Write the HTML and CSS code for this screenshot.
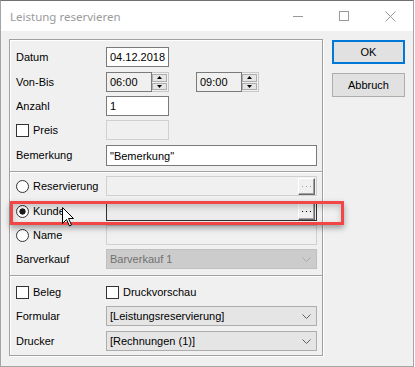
FILE: index.html
```html
<!DOCTYPE html>
<html>
<head>
<meta charset="utf-8">
<link rel="stylesheet" href="styles.css">
</head>
<body>
<div class="win">
  <div class="titlebar">
    <div class="title">Leistung reservieren</div>
    <div class="tbtn"><svg width="10" height="10"><path d="M0 5.5h10" stroke="#999"/></svg></div>
    <div class="tbtn"><svg width="10" height="10"><rect x="0.5" y="0.5" width="9" height="9" fill="none" stroke="#999"/></svg></div>
    <div class="tbtn"><svg width="11" height="11"><path d="M0.5 0.5l10 10M10.5 0.5l-10 10" stroke="#999"/></svg></div>
  </div>
  <div class="client">
    <div class="group">
      <div class="sect s1">
        <div class="row"><span class="lbl">Datum</span><div class="edit w63">04.12.2018</div></div>
        <div class="row r5"><span class="lbl">Von-Bis</span>
          <div class="spin">
            <div class="edit ro w46">06:00</div>
            <div class="sbtns">
              <div class="sb"><svg width="5" height="3"><path d="M2.5 0L5 3H0z"/></svg></div>
              <div class="sb"><svg width="5" height="3"><path d="M0 0H5L2.5 3z"/></svg></div>
            </div>
          </div>
          <div class="spin sp2">
            <div class="edit ro w46">09:00</div>
            <div class="sbtns">
              <div class="sb"><svg width="5" height="3"><path d="M2.5 0L5 3H0z"/></svg></div>
              <div class="sb"><svg width="5" height="3"><path d="M0 0H5L2.5 3z"/></svg></div>
            </div>
          </div>
        </div>
        <div class="row"><span class="lbl">Anzahl</span><div class="edit w63">1</div></div>
        <div class="row"><span class="lbl"><i class="chk"></i>Preis</span><div class="edit dis w63"></div></div>
        <div class="row r5"><span class="lbl">Bemerkung</span><div class="edit wide tall">"Bemerkung"</div></div>
      </div>
      <div class="sep"></div>
      <div class="sect s2">
        <div class="row"><span class="lbl"><i class="radio"></i>Reservierung</span>
          <div class="edit dis wide browse"><div class="dots off"><svg width="9" height="1"><rect x="0" width="1" height="1"/><rect x="4" width="1" height="1"/><rect x="8" width="1" height="1"/></svg></div></div>
        </div>
        <div class="row r5"><span class="lbl"><i class="radio on"></i>Kunde</span>
          <div class="edit kd wide browse"><div class="dots"><svg width="9" height="1"><rect x="0" width="1" height="1"/><rect x="4" width="1" height="1"/><rect x="8" width="1" height="1"/></svg></div></div>
        </div>
        <div class="row"><span class="lbl"><i class="radio"></i>Name</span><div class="edit dis wide"></div></div>
        <div class="row"><span class="lbl">Barverkauf</span>
          <div class="combo dcombo"><span>Barverkauf 1</span><svg width="9" height="5"><path d="M0.5 0.5L4.5 4.5L8.5 0.5" fill="none" stroke="#a8a8a8"/></svg></div>
        </div>
      </div>
      <div class="sep"></div>
      <div class="sect s3">
        <div class="row"><span class="lbl"><i class="chk"></i>Beleg</span><span class="opt"><i class="chk"></i>Druckvorschau</span></div>
        <div class="row"><span class="lbl">Formular</span>
          <div class="combo"><span>[Leistungsreservierung]</span><svg width="9" height="5"><path d="M0.5 0.5L4.5 4.5L8.5 0.5" fill="none" stroke="#606060"/></svg></div>
        </div>
        <div class="row r5"><span class="lbl">Drucker</span>
          <div class="combo"><span>[Rechnungen (1)]</span><svg width="9" height="5"><path d="M0.5 0.5L4.5 4.5L8.5 0.5" fill="none" stroke="#606060"/></svg></div>
        </div>
      </div>
    </div>
    <div class="btns">
      <div class="btn def">OK</div>
      <div class="btn">Abbruch</div>
    </div>
  </div>
  <div class="mark"></div>
  <svg class="cursor" width="13" height="20"><path d="M0.5 0.5V16.5L4.5 12.5L7.5 19L9.5 18L6.5 11.5H11.5Z" fill="#fff" stroke="#000"/></svg>
</div>
</body>
</html>
```

FILE: styles.css
```css
body {margin:0;background:#fff;font-family:"Liberation Sans",Arial,sans-serif;font-size:11px;color:#000;}
.win {position:relative;width:412px;height:365px;border:1px solid #a5a5a5;border-top-color:#707070;background:#f0f0f0;display:flex;flex-direction:column;}
.titlebar {height:30px;background:#fff;display:flex;align-items:center;}
.title {flex:1;padding-left:9px;font-family:"Noto Sans",sans-serif;font-size:11.5px;color:#9a9a9a;}
.tbtn {width:46px;height:30px;display:flex;align-items:center;justify-content:center;}
.client {flex:1;display:flex;align-items:flex-start;gap:9px;padding:8px 8px 0 8px;}
.group {width:314px;box-sizing:border-box;border:1px solid #a0a0a0;box-shadow:1px 1px 0 #fff, inset 1px 1px 0 #fff;padding:0 5px 0 6px;}
.sect {display:flex;flex-direction:column;gap:4px;}
.s1 {padding:7px 0 6px;}
.s2 {padding:3px 0 6px;}
.s3 {padding:5px 0 4px;}
.sep {border-top:1px solid #a0a0a0;border-bottom:1px solid #fff;margin:0 -5px 0 -6px;}
.row {display:flex;align-items:center;height:20px;}
.r5 {margin-top:1px;}
.lbl {width:90px;flex:none;display:flex;align-items:center;}
.opt {display:flex;align-items:center;}
.chk {display:inline-block;width:13px;height:13px;box-sizing:border-box;border:1px solid #333;background:#fff;margin-right:4px;}
.radio {display:inline-block;width:13px;height:13px;box-sizing:border-box;border:1px solid #333;border-radius:50%;background:#fff;margin-right:4px;}
.radio.on {background:radial-gradient(circle, #1a1a1a 0 2.8px, #fff 3.4px);}
.edit {height:20px;box-sizing:border-box;border:1px solid #7a7a7a;background:#fff;padding:0 3px;display:flex;align-items:center;}
.tall {height:21px;align-self:flex-start;}
.w63 {width:63px;}
.w46 {width:46px;}
.wide {width:211px;}
.ro {background:#f0f0f0;}
.dis {border-color:#d0d0d0;background:#f0f0f0;}
.kd {border-color:#303030;background:#ececec;}
.spin {display:flex;}
.sp2 {margin-left:27px;}
.sbtns {width:17px;height:20px;box-sizing:border-box;border:1px solid #c8c8c8;border-left:0;display:flex;flex-direction:column;gap:1px;padding:1px 1px 1px 0;background:#f0f0f0;}
.sb {flex:1;border:1px solid #adadad;background:#e5e5e5;display:flex;align-items:center;justify-content:center;}
.sb svg {fill:#000;}
.browse {justify-content:flex-end;padding:1px;}
.dots {width:17px;height:17px;box-sizing:border-box;background:#f0f0f0;border:1px solid;border-color:#fff #696969 #696969 #fff;box-shadow:inset -1px -1px 0 #a0a0a0;display:flex;align-items:center;justify-content:center;}
.dots svg {fill:#000;}
.dots.off svg {fill:#a0a0a0;}
.combo {width:211px;height:20px;box-sizing:border-box;border:1px solid #adadad;background:#e5e5e5;padding:0 5px 0 3px;display:flex;align-items:center;justify-content:space-between;}
.dcombo {background:#cccccc;border-color:#c0c0c0;color:#707070;}
.btns {display:flex;flex-direction:column;gap:9px;padding-top:1px;}
.btn {width:73px;height:24px;box-sizing:border-box;border:1px solid #adadad;background:#e1e1e1;display:flex;align-items:center;justify-content:center;}
.btn.def {border:2px solid #0078d7;}
.mark {position:absolute;left:9px;top:200px;width:334px;height:24px;box-sizing:border-box;border:3px solid #f24646;box-shadow:0 3px 6px rgba(0,0,0,.35), inset 0 3px 6px rgba(0,0,0,.2);}
.cursor {position:absolute;left:61px;top:206px;}
```
